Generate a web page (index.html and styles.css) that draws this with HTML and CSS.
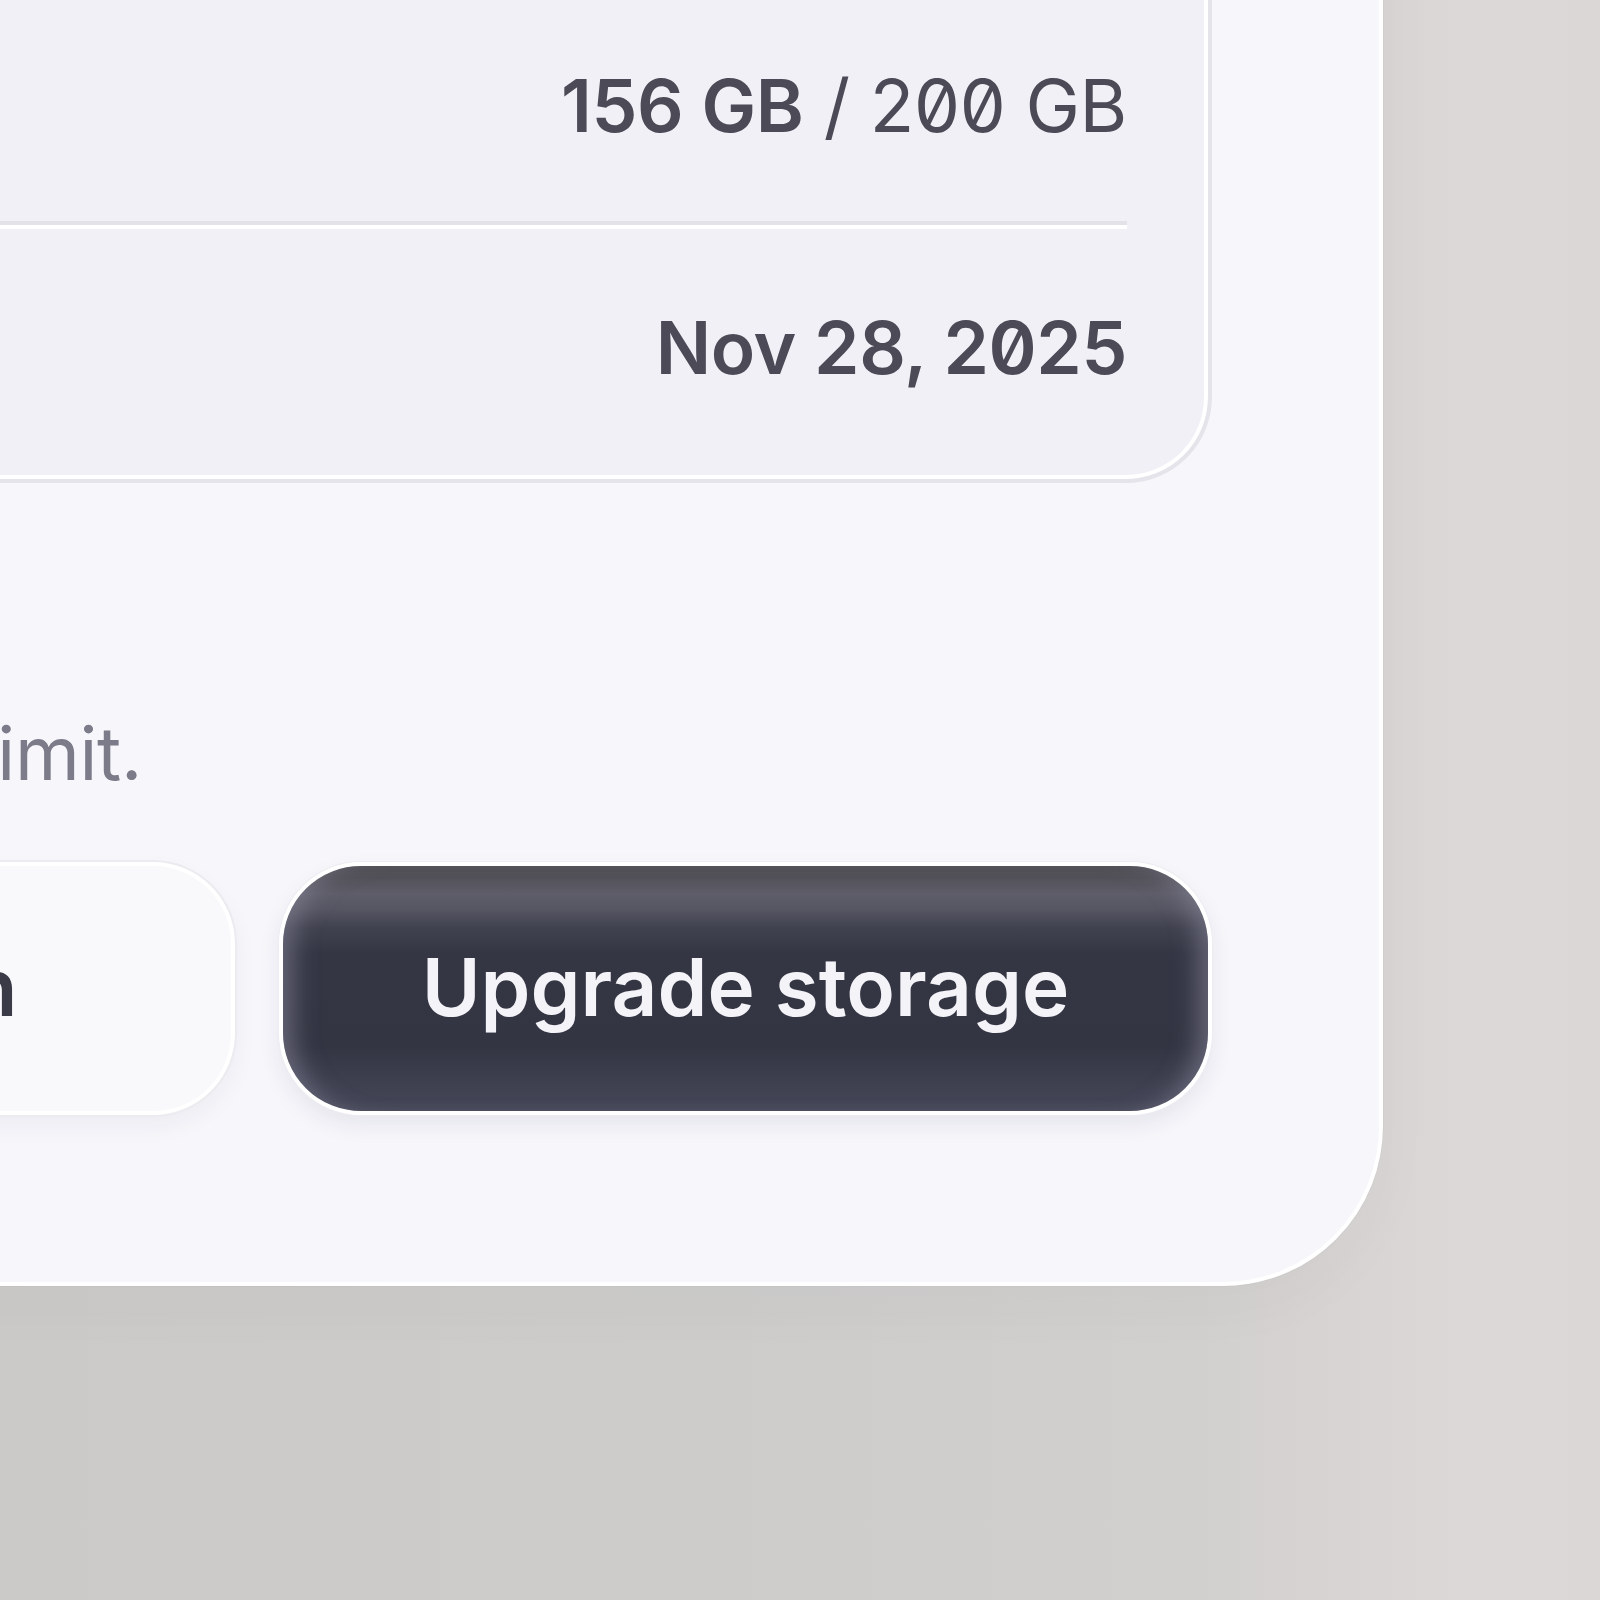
FILE: index.html
```html
<!DOCTYPE html>
<html lang="en">
<head>
<meta charset="utf-8">
<title>Storage</title>
<link rel="stylesheet" href="styles.css">
</head>
<body>
<div class="stage">
  <section class="card">
    <div class="panel">
      <div class="row">
        <span class="label">Storage used</span>
        <span class="value"><strong>156 GB</strong> / 200 GB</span>
      </div>
      <div class="divider"></div>
      <div class="row">
        <span class="label">Renews on</span>
        <span class="value"><strong>Nov 28, 2025</strong></span>
      </div>
    </div>
    <p class="note">Nearly at your plan limit.</p>
    <div class="actions">
      <button class="btn btn-light">Manage plan</button>
      <button class="btn btn-dark">Upgrade storage</button>
    </div>
  </section>
</div>
</body>
</html>
```

FILE: styles.css
```css
* { box-sizing: border-box; }

html, body {
  margin: 0;
  padding: 0;
}

body {
  font-family: Inter, "Noto Sans", "Liberation Sans", sans-serif;
}

.stage {
  width: 1600px;
  height: 1600px;
  overflow: hidden;
  background: linear-gradient(90deg, #cbcac9 0%, #cdcccb 45%, #d2d0cf 75%, #dbd8d7 92%, #dad7d6 100%);
}

.card {
  width: 2252px;
  margin: -326px 0 0 -869px;
  padding: 167px;
  background: #f6f6fb;
  border: 4px solid #ffffff;
  border-radius: 160px;
  box-shadow: 0 0 0 1px rgba(0, 0, 0, 0.02), 0 20px 60px rgba(60, 55, 55, 0.03);
}

.panel {
  background: #f0f0f6;
  border: 4px solid #e5e4ea;
  border-radius: 86px;
  box-shadow: inset 0 0 0 4px #ffffff;
  padding: 138px 81px 16px;
}

.row {
  display: flex;
  justify-content: space-between;
  align-items: center;
  padding: 74px 0 70px;
  font-size: 73px;
  line-height: 90px;
  letter-spacing: -0.005em;
  color: #4b4a56;
}

.label {
  color: #7a7a88;
}

.value {
  font-feature-settings: "zero" 1;
  font-weight: 400;
}

.value strong {
  font-weight: 600;
}

.divider {
  height: 8px;
  background: #e3e2e8;
  border-bottom: 4px solid #ffffff;
}

.note {
  margin: 215px 0 53px;
  font-size: 74px;
  line-height: 111px;
  letter-spacing: -0.3px;
  color: #7b7b89;
}

.actions {
  display: grid;
  grid-template-columns: 1fr 1fr;
  gap: 44px;
}

.btn {
  height: 253px;
  border: 4px solid #ffffff;
  border-radius: 82px;
  padding: 0 0 4px;
  font-family: Inter, "Noto Sans", "Liberation Sans", sans-serif;
  font-size: 80px;
  font-weight: 600;
  cursor: pointer;
}

.btn-light {
  background: #f9f9fc;
  color: #3b3b48;
  box-shadow: 0 0 0 2px #ebebf0, 0 10px 24px rgba(40, 40, 60, 0.05);
}

.btn-dark {
  color: #f3f3f8;
  background: linear-gradient(180deg, #4e4d53 0px, #525158 10px, #5e5d69 28px, #575764 42px, #41424f 62px, #353644 88px, #343543 180px, #3c3e4d 210px, #464859 245px);
  box-shadow: 0 0 0 1px #ececf1, 0 10px 22px rgba(40, 40, 60, 0.08),
    inset 26px 0 24px -16px rgba(140, 140, 160, 0.55),
    inset -26px 0 24px -16px rgba(140, 140, 160, 0.55);
}
```
